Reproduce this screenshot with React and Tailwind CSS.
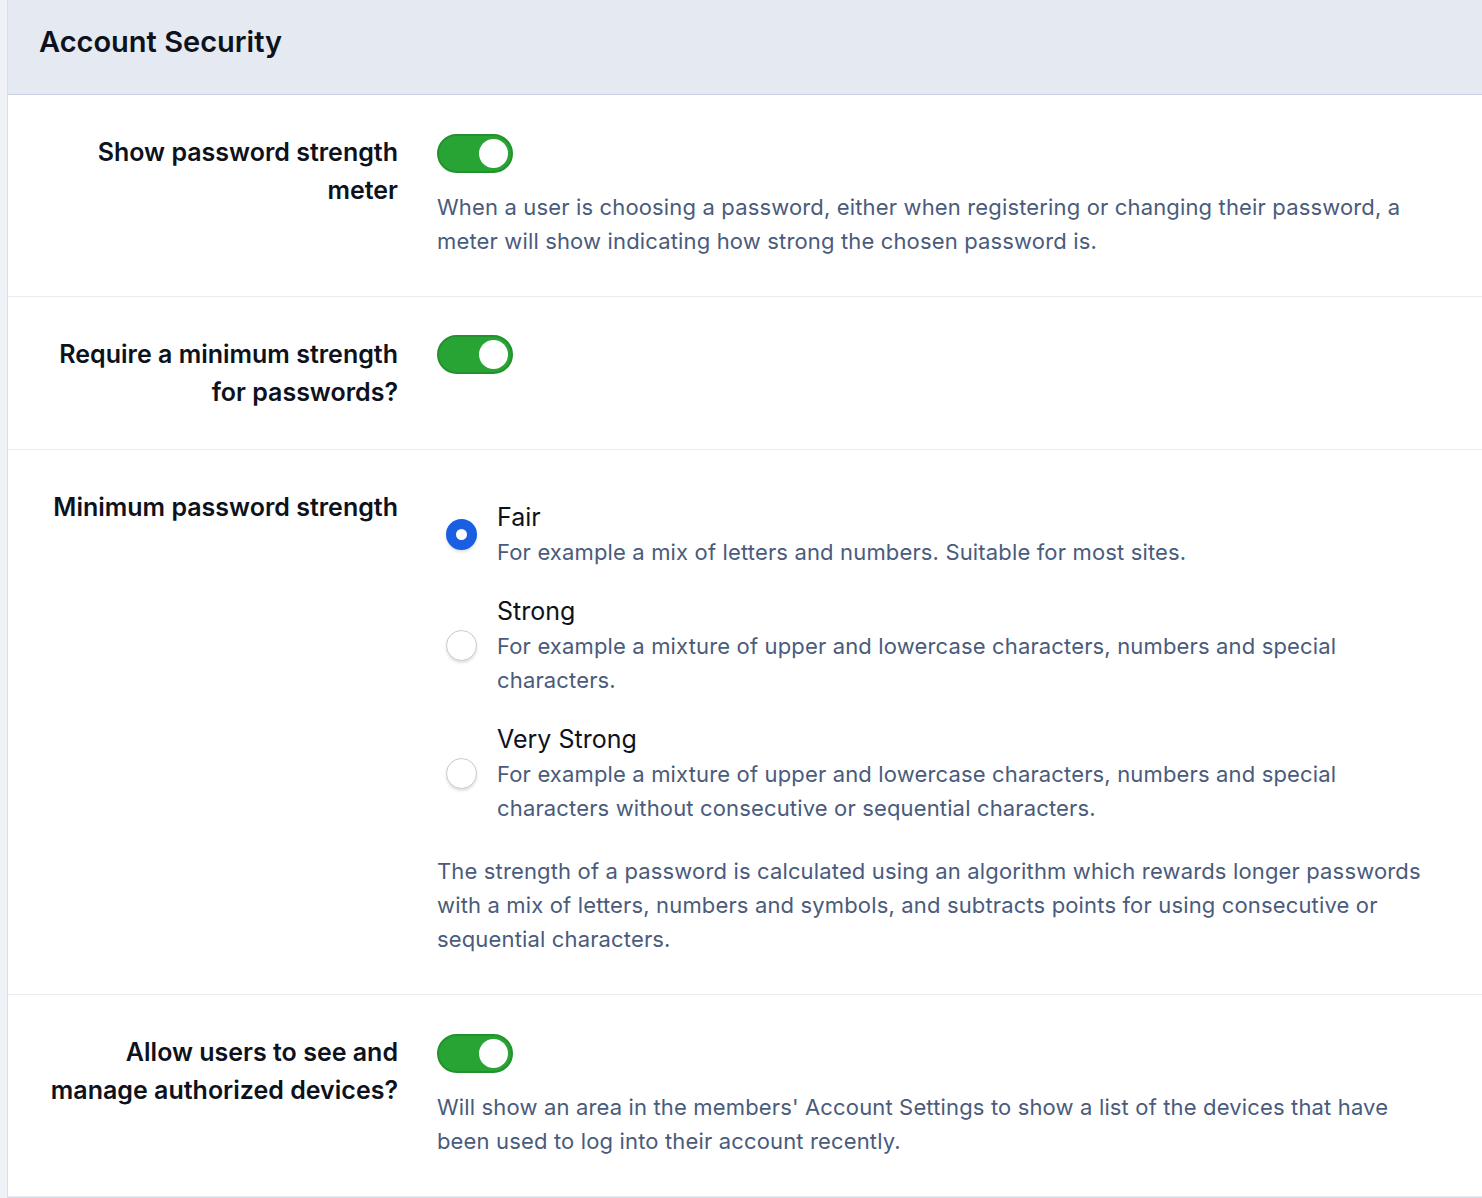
import React, { useState } from 'react';

function Toggle({ on = true }) {
    return (
        <div className={`w-[76px] h-[39px] rounded-full border-2 flex items-center px-[3px] ${on ? 'bg-[#28a434] border-[#23922e] justify-end' : 'bg-gray-300 border-gray-300 justify-start'}`}>
            <div className="w-[29px] h-[29px] rounded-full bg-white" />
        </div>
    );
}

function Row({ label, children }) {
    return (
        <div className="flex border-b border-[#e8ebf0] py-[38px]">
            <div className="w-[390px] shrink-0 text-right text-[25px] leading-[38px] font-semibold text-[#0d121c]">
                {label}
            </div>
            <div className="flex-1 pl-[39px] pr-[50px]">{children}</div>
        </div>
    );
}

const levels = [
    { key: 'fair', title: 'Fair', desc: 'For example a mix of letters and numbers. Suitable for most sites.' },
    { key: 'strong', title: 'Strong', desc: 'For example a mixture of upper and lowercase characters, numbers and special characters.' },
    { key: 'very', title: 'Very Strong', desc: 'For example a mixture of upper and lowercase characters, numbers and special characters without consecutive or sequential characters.' },
];

const desc = 'text-[22px] leading-[34px] tracking-[0.15px] text-[#4a5b7b]';

export default function App() {
    const [level, setLevel] = useState('fair');

    return (
        <div className="min-h-[1198px] bg-[#eef1f6] pl-[7px]" style={{ fontFamily: 'Inter, "Noto Sans", sans-serif' }}>
            <div className="bg-white border-l border-[#d9dfe9] border-b border-b-[#d5dce8]">
                {/* Header */}
                <div className="h-[95px] bg-[#e5eaf2] border-b border-[#c8d2e4] flex items-center pl-[31px] pb-[11px]">
                    <h2 className="text-[29px] font-semibold text-[#0d121c]">Account Security</h2>
                </div>

                <Row label={<>Show password strength<br />meter</>}>
                    <div className="pt-[1px]"><Toggle /></div>
                    <p className={`mt-[17px] ${desc}`}>
                        When a user is choosing a password, either when registering or changing their password, a meter will show indicating how strong the chosen password is.
                    </p>
                </Row>

                <Row label={<>Require a minimum strength<br />for passwords?</>}>
                    <Toggle />
                </Row>

                <Row label="Minimum password strength">
                    <div className="mt-[11px] flex flex-col gap-[24px]">
                        {levels.map((l) => (
                            <label key={l.key} className="flex items-center cursor-pointer" onClick={() => setLevel(l.key)}>
                                <span className="ml-[9px] mr-[20px] shrink-0">
                                    {level === l.key ? (
                                        <span className="block w-[31px] h-[31px] rounded-full border-[10px] border-[#1a5fe2] bg-white shadow-[0_2px_3px_rgba(0,0,0,0.12)]" />
                                    ) : (
                                        <span className="block w-[31px] h-[31px] rounded-full border border-[#c4ccd8] bg-white shadow-[0_2px_3px_rgba(0,0,0,0.12)]" />
                                    )}
                                </span>
                                <span className="block">
                                    <span className="block text-[25px] leading-[36px] text-[#0d121c]">{l.title}</span>
                                    <span className={`block ${desc}`}>{l.desc}</span>
                                </span>
                            </label>
                        ))}
                    </div>
                    <p className={`mt-[29px] ${desc}`}>
                        The strength of a password is calculated using an algorithm which rewards longer passwords with a mix of letters, numbers and symbols, and subtracts points for using consecutive or sequential characters.
                    </p>
                </Row>

                <Row label={<>Allow users to see and<br />manage authorized devices?</>}>
                    <div className="pt-[1px]"><Toggle /></div>
                    <p className={`mt-[17px] ${desc}`}>
                        Will show an area in the members' Account Settings to show a list of the devices that have been used to log into their account recently.
                    </p>
                </Row>
            </div>
        </div>
    );
}
